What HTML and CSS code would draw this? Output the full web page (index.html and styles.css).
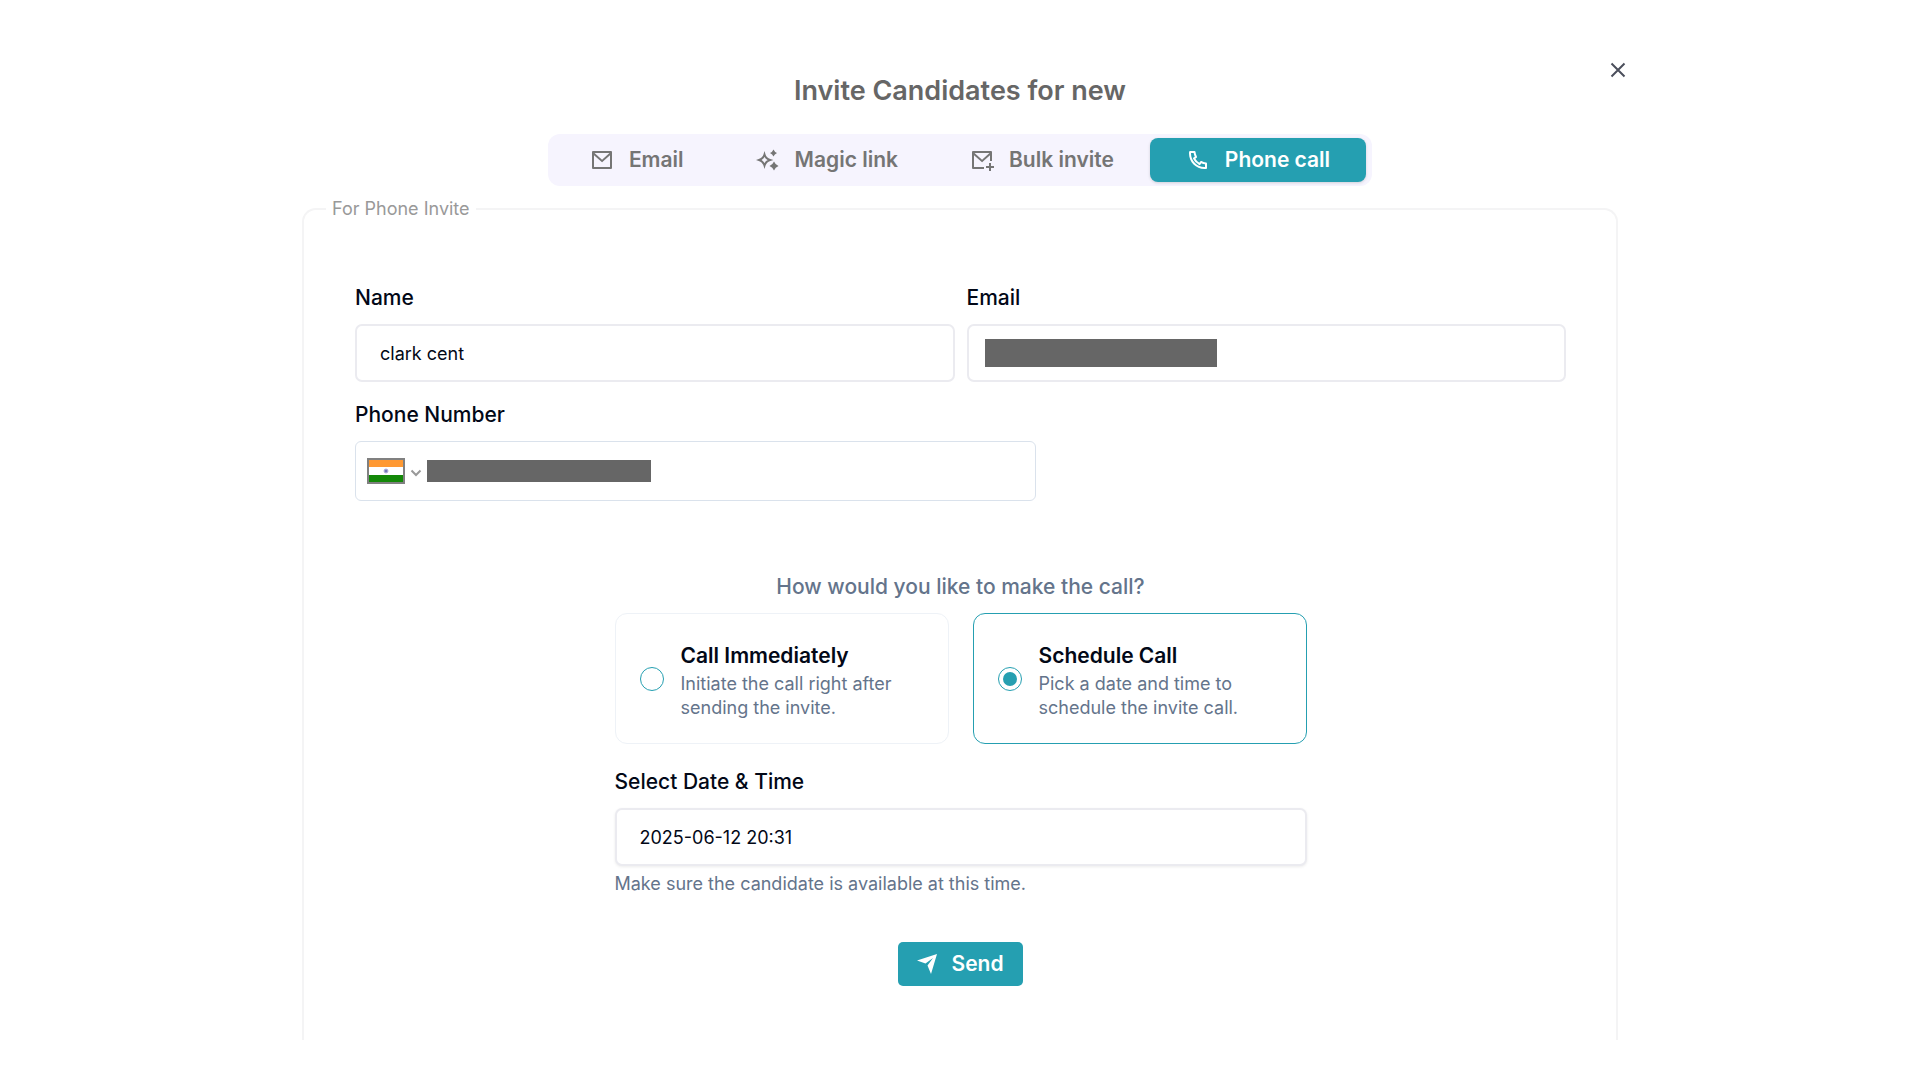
FILE: index.html
```html
<!DOCTYPE html>
<html lang="en">
<head>
    <meta charset="UTF-8">
    <meta name="viewport" content="width=device-width, initial-scale=1.0">
    <title>Invite Candidates</title>
    <link rel="stylesheet" href="styles.css">
</head>
<body>
    <main class="modal">
        <button class="close-btn" type="button" aria-label="Close">
            <svg viewBox="0 0 16 16"><path d="M1.5 1.5l13 13M14.5 1.5l-13 13"></path></svg>
        </button>

        <h1 class="modal-title">Invite Candidates for new</h1>

        <!-- Invite type tabs -->
        <nav class="tabs">
            <button class="tab" type="button">
                <svg viewBox="0 0 24 24"><path d="M3 3h18a1 1 0 0 1 1 1v16a1 1 0 0 1-1 1H3a1 1 0 0 1-1-1V4a1 1 0 0 1 1-1zm17 4.238l-7.928 7.1L4 7.216V19h16V7.238zM4.511 5l7.55 6.662L19.502 5H4.511z"></path></svg>
                Email
            </button>
            <button class="tab" type="button">
                <svg viewBox="0 0 24 24">
                    <path class="star-outline" d="M8.500 6.500Q9.800 10.700 14 12Q9.800 13.300 8.500 17.500Q7.200 13.300 3 12Q7.200 10.700 8.500 6.500z"></path>
                    <path d="M17.500 1.500Q18.500 4 21 5Q18.500 6 17.500 8.500Q16.500 6 14 5Q16.500 4 17.500 1.500zM18 13.500Q19.300 16.700 22.500 18Q19.300 19.300 18 22.500Q16.700 19.300 13.500 18Q16.700 16.700 18 13.500z"></path>
                </svg>
                Magic link
            </button>
            <button class="tab" type="button">
                <svg viewBox="0 0 24 24"><path d="M22 13h-2V7.238l-7.928 7.1L4 7.216V19h10v2H3a1 1 0 0 1-1-1V4a1 1 0 0 1 1-1h18a1 1 0 0 1 1 1v9zM4.511 5l7.55 6.662L19.502 5H4.511zM19 18v-3h2v3h3v2h-3v3h-2v-3h-3v-2h3z"></path></svg>
                Bulk invite
            </button>
            <button class="tab active" type="button">
                <svg viewBox="0 0 24 24"><path d="M9.366 10.682a10.556 10.556 0 0 0 3.952 3.952l.884-1.238a1 1 0 0 1 1.294-.296 11.422 11.422 0 0 0 4.583 1.364 1 1 0 0 1 .921.997v4.462a1 1 0 0 1-.898.995c-.53.055-1.064.082-1.602.082C9.94 21 3 14.06 3 5.500c0-.538.027-1.072.082-1.602A1 1 0 0 1 4.077 3h4.462a1 1 0 0 1 .997.921A11.422 11.422 0 0 0 10.900 8.504a1 1 0 0 1-.296 1.294l-1.238.884zm-2.522-.657l1.900-1.357A13.410 13.410 0 0 1 7.647 5H5.010c-.006.166-.009.333-.009.500C5 12.956 11.044 19 18.500 19c.167 0 .334-.003.500-.010v-2.637a13.410 13.410 0 0 1-3.668-1.097l-1.357 1.900a12.442 12.442 0 0 1-1.588-.750l-.058-.033a12.556 12.556 0 0 1-4.702-4.702l-.033-.058a12.442 12.442 0 0 1-.750-1.588z"></path></svg>
                Phone call
            </button>
        </nav>

        <form class="invite-form">
            <fieldset class="panel">
                <legend>For Phone Invite</legend>

                <!-- Candidate details -->
                <div class="details">
                    <div class="field">
                        <label for="name">Name</label>
                        <input class="input" type="text" id="name" value="clark cent">
                    </div>
                    <div class="field">
                        <label for="email">Email</label>
                        <div class="masked-field">
                            <input class="input" type="email" id="email">
                            <span class="mask mask-email"></span>
                        </div>
                    </div>
                </div>

                <div class="field phone-field">
                    <label for="phone">Phone Number</label>
                    <div class="phone-box">
                        <div class="country">
                            <svg class="flag" viewBox="0 0 38 26">
                                <rect width="38" height="26" fill="#808080"></rect>
                                <rect x="2" y="2" width="34" height="8" fill="#ff9933"></rect>
                                <rect x="2" y="9" width="34" height="8" fill="#ffffff"></rect>
                                <rect x="2" y="17" width="34" height="7" fill="#138808"></rect>
                                <circle cx="19" cy="13" r="2" fill="#7777bb" stroke="#b5b5dd"></circle>
                            </svg>
                            <svg class="chevron" viewBox="0 0 10 6"><path d="M0.500 0.500l4.500 4.500 4.500-4.500"></path></svg>
                            <select aria-label="Phone number country">
                                <option>India</option>
                            </select>
                        </div>
                        <div class="masked-field">
                            <input type="tel" id="phone">
                            <span class="mask mask-phone"></span>
                        </div>
                    </div>
                </div>

                <!-- Call options -->
                <div class="call-section">
                    <p class="question" id="question">How would you like to make the call?</p>
                    <div class="options" role="radiogroup" aria-labelledby="question">
                        <label class="option">
                            <input type="radio" name="call">
                            <span class="option-text">
                                <strong>Call Immediately</strong>
                                <span>Initiate the call right after sending the invite.</span>
                            </span>
                        </label>
                        <label class="option">
                            <input type="radio" name="call" checked>
                            <span class="option-text">
                                <strong>Schedule Call</strong>
                                <span>Pick a date and time to schedule the invite call.</span>
                            </span>
                        </label>
                    </div>

                    <div class="field">
                        <label for="datetime">Select Date &amp; Time</label>
                        <input class="input" type="text" id="datetime" value="2025-06-12 20:31">
                    </div>
                    <p class="hint">Make sure the candidate is available at this time.</p>
                </div>

                <button class="send-btn" type="submit">
                    <svg viewBox="0 0 20 20"><path d="M0 6.500L20 0 14 20 10.500 11.500 16 4 8.500 9.500z"></path></svg>
                    Send
                </button>
            </fieldset>
        </form>
    </main>
</body>
</html>
```

FILE: styles.css
```css
* {
    margin: 0;
    padding: 0;
    box-sizing: border-box;
}

body {
    font-family: Inter, sans-serif;
    font-size: 18px;
    line-height: 24px;
    color: #020817;
    background-color: #fff;
}

button,
input,
select {
    font: inherit;
    color: inherit;
}

button {
    border: none;
    cursor: pointer;
}

/* Modal */
.modal {
    position: relative;
    display: flex;
    flex-direction: column;
    max-width: 1364px;
    height: calc(100vh - 80px);
    margin: 40px auto;
    padding: 33px 24px 0;
    overflow: hidden;
}

.close-btn {
    position: absolute;
    top: 18px;
    right: 12px;
    display: flex;
    padding: 4px;
    background: none;
}

.close-btn svg {
    width: 16px;
    height: 16px;
    fill: none;
    stroke: #4b4f5c;
    stroke-width: 2;
}

.modal-title {
    font-size: 27px;
    font-weight: 600;
    line-height: 36px;
    text-align: center;
    color: #666;
}

/* Tabs */
.tabs {
    display: flex;
    align-self: center;
    margin: 25px 0 11px;
    padding: 4px 6px;
    background-color: #f6f4fe;
    border-radius: 12px;
}

.tab {
    display: flex;
    align-items: center;
    gap: 15px;
    height: 44px;
    padding: 0 36px;
    font-size: 21px;
    font-weight: 600;
    color: #757575;
    background: none;
    border-radius: 8px;
}

.tab svg {
    width: 24px;
    height: 24px;
    fill: currentColor;
}

.tab .star-outline {
    fill: none;
    stroke: currentColor;
    stroke-width: 2;
}

.tab.active {
    color: #fff;
    background-color: #259fb1;
    box-shadow: 0 1px 3px rgba(0, 0, 0, 0.15);
}

/* Form panel */
.invite-form {
    display: flex;
    flex: 1;
}

.panel {
    flex: 1;
    min-width: 0;
    padding: 63px 50px 0 51px;
    border: 2px solid #f4f4f5;
    border-bottom: none;
    border-radius: 14px 14px 0 0;
}

.panel legend {
    margin-left: -29px;
    padding: 0 6px;
    color: #999;
}

.field label {
    display: block;
    margin-bottom: 12px;
    font-size: 21px;
    font-weight: 500;
    line-height: 28px;
}

.input {
    display: block;
    width: 100%;
    height: 58px;
    padding: 0 23px;
    background-color: #fff;
    border: 2px solid #ebebf0;
    border-radius: 7px;
}

.details {
    display: grid;
    grid-template-columns: 1fr 1fr;
    gap: 12px;
    margin-bottom: 19px;
}

/* Hidden contact values */
.masked-field {
    position: relative;
    flex: 1;
}

.mask {
    position: absolute;
    top: 50%;
    transform: translateY(-50%);
    background-color: #666;
}

.mask-email {
    left: 18px;
    width: 232px;
    height: 28px;
}

.mask-phone {
    left: 6px;
    width: 224px;
    height: 22px;
}

/* Phone input */
.phone-field {
    max-width: 681px;
}

.phone-box {
    display: flex;
    align-items: center;
    height: 60px;
    padding: 0 11px;
    border: 1px solid #dae2ec;
    border-radius: 6px;
}

.phone-box input {
    display: block;
    width: 100%;
    height: 40px;
    padding-left: 6px;
    border: none;
    background: none;
}

.country {
    position: relative;
    display: flex;
    align-items: center;
    gap: 6px;
}

.country select {
    position: absolute;
    inset: 0;
    width: 100%;
    opacity: 0;
}

.flag {
    width: 38px;
    height: 26px;
}

.chevron {
    width: 10px;
    height: 6px;
    margin-top: 4px;
    overflow: visible;
    fill: none;
    stroke: #999;
    stroke-width: 2;
}

/* Call options */
.call-section {
    max-width: 692px;
    margin: 72px auto 0;
}

.question {
    margin-bottom: 12px;
    font-size: 21px;
    font-weight: 500;
    line-height: 28px;
    text-align: center;
    color: #64748b;
}

.options {
    display: grid;
    grid-template-columns: 1fr 1fr;
    gap: 24px;
    margin-bottom: 24px;
}

.option {
    display: flex;
    align-items: center;
    gap: 17px;
    padding: 23px 24px;
    border: 1px solid #eef2f7;
    border-radius: 12px;
    cursor: pointer;
}

.option:has(input:checked) {
    border-color: #259fb1;
}

.option input {
    appearance: none;
    flex-shrink: 0;
    width: 24px;
    height: 24px;
    border: 1px solid #259fb1;
    border-radius: 50%;
}

.option input:checked {
    padding: 4px;
    background: #259fb1;
    background-clip: content-box;
}

.option-text {
    display: flex;
    flex-direction: column;
    gap: 2px;
    padding-top: 5px;
    color: #64748b;
}

.option-text strong {
    font-size: 21px;
    font-weight: 600;
    line-height: 28px;
    color: #020817;
}

.call-section .input {
    box-shadow: 0 1px 3px rgba(0, 0, 0, 0.08);
}

.hint {
    margin-top: 6px;
    color: #64748b;
}

/* Send button */
.send-btn {
    display: flex;
    align-items: center;
    gap: 14px;
    height: 44px;
    margin: 46px auto 0;
    padding: 0 19px;
    font-size: 21px;
    font-weight: 600;
    color: #fff;
    background-color: #259fb1;
    border-radius: 5px;
}

.send-btn svg {
    width: 20px;
    height: 20px;
    fill: currentColor;
}
```
